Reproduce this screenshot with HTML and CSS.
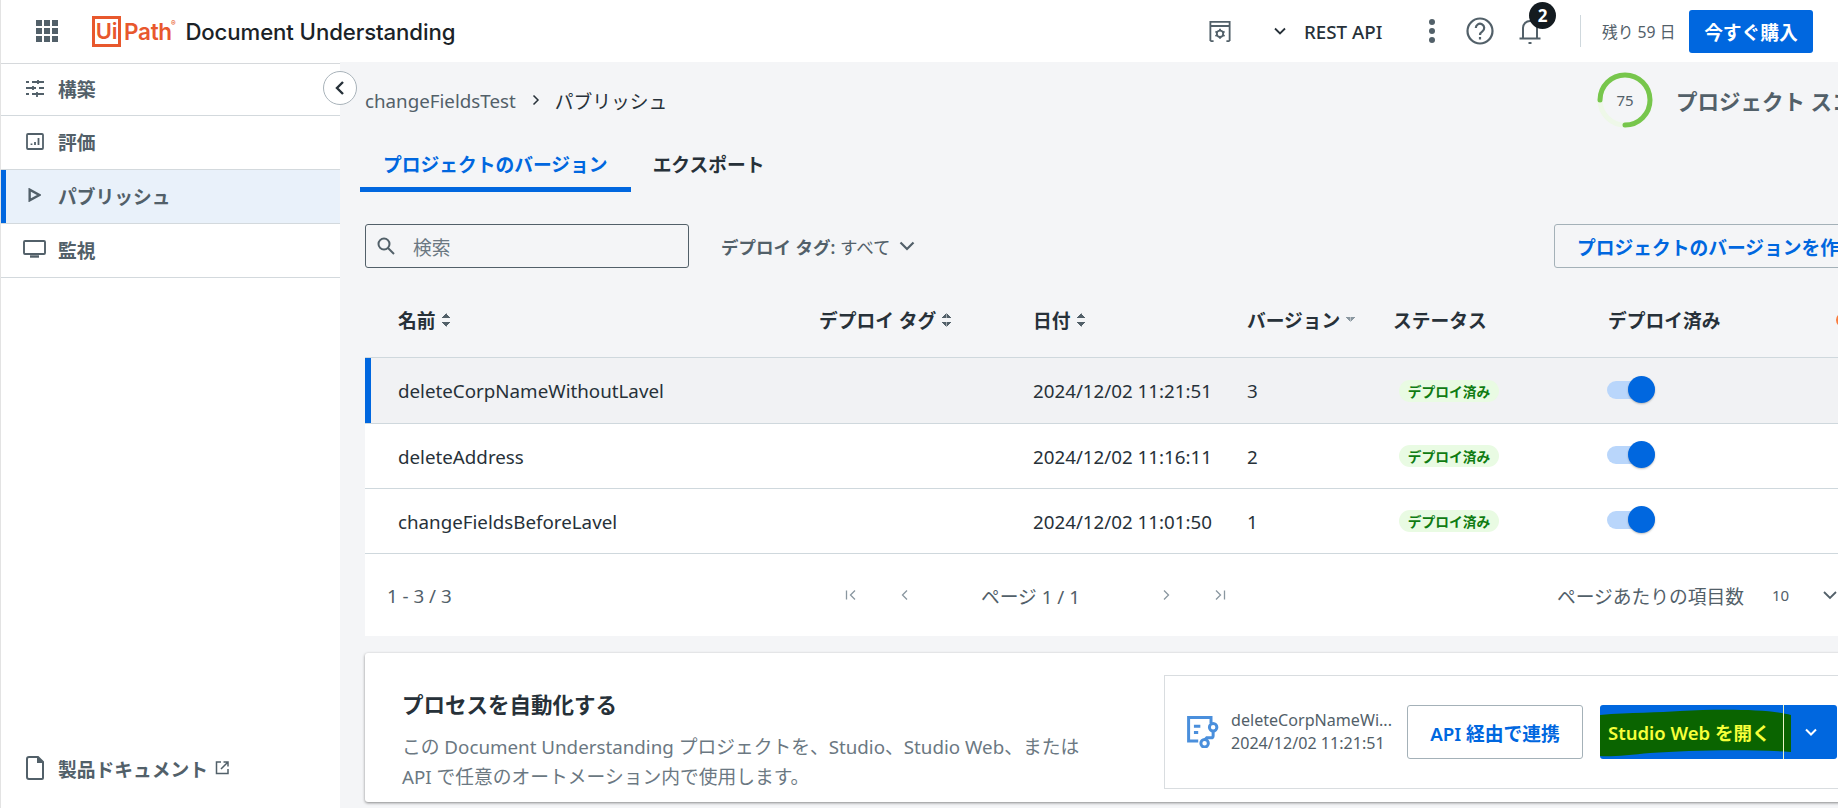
FILE: index.html
```html
<!DOCTYPE html>
<html lang="ja">
<head>
<meta charset="utf-8">
<title>Document Understanding</title>
<link rel="stylesheet" href="styles.css">
</head>
<body>
<div class="app">
  <header class="topbar">
    <div class="waffle"><i></i><i></i><i></i><i></i><i></i><i></i><i></i><i></i><i></i></div>
    <div class="logo"><span class="logo-ui">Ui</span><span class="logo-path">Path</span><span class="logo-r">®</span></div>
    <div class="product">Document Understanding</div>
    <div class="top-right">
      <svg class="ic-tenant" viewBox="0 0 24 24" fill="none" stroke="#526069" stroke-width="2"><path d="M1.500 23V2h21v21M1.500 6.500h21M1.500 23h3.500M22.500 23H19"/><circle cx="12" cy="15" r="3.500"/><path d="M12 9.500v2M12 18.500v2M7 12.500l1.800 1M15.200 16.500l1.800 1M7 17.500l1.800-1M15.200 13.500l1.800-1"/></svg>
      <svg class="ic-chev-s" viewBox="0 0 12 8" fill="none" stroke="#273139" stroke-width="1.800"><path d="M1 1.500l5 5 5-5"/></svg>
      <span class="rest">REST API</span>
      <div class="kebab"><i></i><i></i><i></i></div>
      <svg class="ic-help" viewBox="0 0 28 28" fill="none" stroke="#526069" stroke-width="2.200"><circle cx="14" cy="14" r="12.500"/><path d="M9.800 11a4.200 4.200 0 1 1 6.600 3.400c-1.500 1-2.400 1.800-2.400 3.600" /><path d="M14 20v2.500"/></svg>
      <div class="bell">
        <svg class="ic-bell" viewBox="0 0 24 28" fill="none" stroke="#526069" stroke-width="2"><path d="M5 21V11a7 7 0 0 1 14 0v10M1.500 21.500h21"/><path d="M10.500 26h3"/></svg>
        <span class="badge">2</span>
      </div>
      <span class="vline"></span>
      <span class="trial">残り 59 日</span>
      <span class="buy">今すぐ購入</span>
    </div>
  </header>

  <div class="body-row">
    <aside class="sidebar">
      <button class="collapse"><svg viewBox="0 0 10 16" fill="none" stroke="#273139" stroke-width="2.400"><path d="M8 2L2 8l6 6"/></svg></button>
      <nav class="nav">
        <a class="nav-item"><span class="nav-ic"><svg width="20" height="18" viewBox="0 0 20 18" fill="none" stroke="#526069" stroke-width="1.800"><path d="M1 3h3M7 3h12M13 1v4M1 9h10M14 9h5M8 7v4M1 15h3M7 15h12M12 13v5"/></svg></span>構築</a>
        <a class="nav-item"><span class="nav-ic"><svg width="18" height="17" viewBox="0 0 18 17" fill="none" stroke="#526069" stroke-width="1.800"><rect x="1" y="1" width="16" height="15" rx="1"/><path d="M5.500 12v-1.500M9 12V9M12.500 12V5"/></svg></span>評価</a>
        <a class="nav-item active"><span class="nav-ic"><svg width="13" height="14" viewBox="0 0 12 13" fill="none" stroke="#526069" stroke-width="2.200"><path d="M1.500 1.500v10l9-5z"/></svg></span>パブリッシュ</a>
        <a class="nav-item"><span class="nav-ic"><svg width="23" height="18" viewBox="0 0 23 18" fill="none" stroke="#526069" stroke-width="1.900"><rect x="1" y="1" width="21" height="13" rx="1"/><path d="M7 16.500h9" stroke-width="2.400"/></svg></span>監視</a>
      </nav>
      <a class="docs"><span class="nav-ic"><svg width="18" height="24" viewBox="0 0 18 24" fill="none" stroke="#526069" stroke-width="2"><path d="M3 1h9l5 5v16a1 1 0 0 1-1 1H3a2 2 0 0 1-2-2V3a2 2 0 0 1 2-2z"/><path d="M12 1v5h5" fill="#526069"/></svg></span>製品ドキュメント<svg class="ic-ext" width="14" height="14" viewBox="0 0 14 14" fill="none" stroke="#526069" stroke-width="1.500"><path d="M6 1H1.500v11.500H13V8M8.500 1H13v4.500M13 1L6 8"/></svg></a>
    </aside>

    <main class="main">
      <div class="inner">
        <div class="crumb-row">
          <div class="crumbs"><span class="crumb-a">changeFieldsTest</span><svg class="crumb-sep" viewBox="0 0 8 12" fill="none" stroke="#273139" stroke-width="1.500"><path d="M1.500 1.500L6 6l-4.500 4.500"/></svg><span class="crumb-b">パブリッシュ</span></div>
          <div class="score">
            <svg class="ring" viewBox="0 0 56 56" fill="none"><circle cx="28" cy="28" r="25" stroke="#eef8e8" stroke-width="5"/><path d="M3 28A25 25 0 1 1 28 53" stroke="#77c64c" stroke-width="5" stroke-linecap="round"/></svg>
            <span class="score-num">75</span>
            <span class="score-title">プロジェクト スコア</span>
          </div>
        </div>

        <div class="tabs">
          <div class="tab active">プロジェクトのバージョン</div>
          <div class="tab">エクスポート</div>
        </div>

        <div class="toolbar">
          <div class="search">
            <svg width="18" height="18" viewBox="0 0 18 18" fill="none" stroke="#526069" stroke-width="2"><circle cx="7" cy="7" r="5.500"/><path d="M11 11l6 6"/></svg>
            <span>検索</span>
          </div>
          <div class="filter"><b>デプロイ タグ:</b> すべて<svg width="16" height="10" viewBox="0 0 16 10" fill="none" stroke="#526069" stroke-width="2.200"><path d="M1.500 1.500L8 8l6.500-6.500"/></svg></div>
          <div class="create">プロジェクトのバージョンを作成</div>
        </div>

        <div class="table">
          <div class="row head">
            <div class="cell">名前<span class="sort"></span></div>
            <div class="cell">デプロイ タグ<span class="sort"></span></div>
            <div class="cell">日付<span class="sort"></span></div>
            <div class="cell">バージョン<span class="sort down"></span></div>
            <div class="cell">ステータス</div>
            <div class="cell">デプロイ済み<span class="warn"></span></div>
          </div>
          <div class="row item selected">
            <div class="cell">deleteCorpNameWithoutLavel</div><div class="cell"></div>
            <div class="cell">2024/12/02 11:21:51</div><div class="cell">3</div>
            <div class="cell"><span class="pill">デプロイ済み</span></div>
            <div class="cell"><span class="toggle"></span></div>
          </div>
          <div class="row item">
            <div class="cell">deleteAddress</div><div class="cell"></div>
            <div class="cell">2024/12/02 11:16:11</div><div class="cell">2</div>
            <div class="cell"><span class="pill">デプロイ済み</span></div>
            <div class="cell"><span class="toggle"></span></div>
          </div>
          <div class="row item">
            <div class="cell">changeFieldsBeforeLavel</div><div class="cell"></div>
            <div class="cell">2024/12/02 11:01:50</div><div class="cell">1</div>
            <div class="cell"><span class="pill">デプロイ済み</span></div>
            <div class="cell"><span class="toggle"></span></div>
          </div>
          <div class="pager">
            <span class="count">1 - 3 / 3</span>
            <svg class="pg pg-first" viewBox="0 0 12 12" fill="none" stroke="#8a97a0" stroke-width="1.300"><path d="M1.500 1.500v9M10 1.500L5.500 6l4.500 4.500"/></svg>
            <svg class="pg pg-prev" viewBox="0 0 12 12" fill="none" stroke="#8a97a0" stroke-width="1.300"><path d="M8 1.500L3.500 6 8 10.500"/></svg>
            <span class="page">ページ 1 / 1</span>
            <svg class="pg pg-next" viewBox="0 0 12 12" fill="none" stroke="#8a97a0" stroke-width="1.300"><path d="M4 1.500L8.500 6 4 10.500"/></svg>
            <svg class="pg pg-last" viewBox="0 0 12 12" fill="none" stroke="#8a97a0" stroke-width="1.300"><path d="M10.500 1.500v9M2 1.500L6.500 6 2 10.500"/></svg>
            <span class="perpage">ページあたりの項目数</span>
            <span class="size">10</span>
            <svg class="pg-chev" viewBox="0 0 14 9" fill="none" stroke="#526069" stroke-width="1.800"><path d="M1 1l6 6 6-6"/></svg>
          </div>
        </div>

        <section class="card">
          <div class="card-text">
            <h2>プロセスを自動化する</h2>
            <p>この Document Understanding プロジェクトを、Studio、Studio Web、または<br>API で任意のオートメーション内で使用します。</p>
          </div>
          <div class="box">
            <svg class="ic-flow" viewBox="1.500 1.500 30 30" fill="none" stroke="#4a8fdc" stroke-width="2.800"><path d="M24 8V3H3v22h9"/><path d="M8 11h6M8 17h4"/><circle cx="26" cy="12" r="3.500"/><circle cx="18" cy="27" r="3.500"/><path d="M26 16v4a2 2 0 0 1-2 2h-4l-2 2"/></svg>
            <div class="ver"><div>deleteCorpNameWi...</div><div>2024/12/02 11:21:51</div></div>
            <div class="btn-api">API 経由で連携</div>
            <div class="btn-studio">
              <svg class="scribble" viewBox="0 0 191 54" preserveAspectRatio="none"><path fill="#0a6400" d="M0 10C30 7 60 8 80 6 120 4 170 4 191 10V47C150 44 90 45 50 48 30 50 10 52 0 51Z"/></svg>
              <span class="studio-main">Studio Web を開く</span>
              <span class="studio-chev"><svg width="12" height="8" viewBox="0 0 12 8" fill="none" stroke="#fff" stroke-width="2"><path d="M1 1.500l5 5 5-5"/></svg></span>
            </div>
          </div>
        </section>
      </div>
    </main>
  </div>
</div>
</body>
</html>
```

FILE: styles.css
```css
* { box-sizing: border-box; }
html, body { margin: 0; height: 100%; overflow: hidden; }
body {
  font-family: "Noto Sans", "Noto Sans CJK JP", sans-serif;
  color: #273139;
  background: #fff;
}
.app { height: 808px; width: 1838px; display: flex; flex-direction: column; border-left: 1px solid #e3e3e3; overflow: hidden; }

/* top bar */
.topbar { height: 62px; flex: none; display: flex; align-items: center; background: #fff; }
.waffle { width: 22px; height: 22px; margin-left: 35px; display: grid; grid-template-columns: repeat(3, 6px); gap: 2px; }
.waffle i { background: #526069; width: 6px; height: 6px; }
.logo { margin-left: 34px; display: flex; align-items: center; color: #e8582d; font-family: "Inter", sans-serif; font-weight: 600; font-size: 22.500px; letter-spacing: -0.3px; }
.logo-ui { border: 3px solid #e8582d; width: 29px; height: 31px; display: flex; align-items: center; justify-content: center; font-size: 22px; line-height: 1; }
.logo-path { margin-left: 3px; width: 47px; white-space: nowrap; }
.logo-r { font-size: 7px; align-self: flex-start; margin-top: 3px; }
.product { margin-left: 10px; font-family: "Inter", sans-serif; font-weight: 500; font-size: 22.200px; letter-spacing: -0.1px; color: #1b2227; }
.top-right { margin-left: auto; display: flex; align-items: center; height: 100%; position: relative; }
.ic-tenant { width: 22px; height: 22px; margin-right: 43px; }
.ic-chev-s { width: 12px; height: 8px; margin-right: 18px; }
.rest { font-size: 18.750px; font-weight: 500; width: 80px; white-space: nowrap; margin-right: 45px; }
.kebab { width: 6px; display: flex; flex-direction: column; gap: 3px; margin-right: 31px; }
.kebab i { width: 6px; height: 6px; border-radius: 50%; background: #526069; }
.ic-help { width: 28px; height: 28px; margin-right: 24px; }
.bell { position: relative; width: 24px; height: 28px; margin-right: 38px; }
.ic-bell { width: 24px; height: 28px; display: block; }
.badge { position: absolute; left: 11px; top: -15px; width: 27px; height: 27px; border-radius: 50%; background: #141b20; color: #fff; font-size: 17px; font-weight: 700; display: flex; align-items: center; justify-content: center; }
.vline { width: 1px; height: 32px; background: #cfd8dd; margin-right: 21px; }
.trial { font-size: 15.750px; color: #526069; width: 74px; white-space: nowrap; margin-right: 13px; }
.buy { width: 124px; height: 43px; background: #0067df; color: #fff; border-radius: 3px; display: flex; align-items: center; justify-content: center; font-size: 18.750px; font-weight: 700; margin-right: 25px; }

/* layout */
.body-row { flex: 1; display: flex; min-height: 0; }
.sidebar { width: 339px; flex: none; position: relative; display: flex; flex-direction: column; background: #fff; border-top: 1px solid #d6d9dc; margin-top: 1px; }
.nav-item { height: 54px; display: flex; align-items: center; font-size: 18.750px; font-weight: 600; color: #526069; border-bottom: 1px solid #d3d9dd; padding-bottom: 3px; }
.nav-item:first-child { height: 52px; }
.nav-item.active { background: #e9f1fa; box-shadow: inset 5px 0 0 #0067df; border-top: 1px solid #d3d9dd; margin-top: -1px; height: 55px; }
.nav-ic { width: 57px; flex: none; display: flex; justify-content: center; padding-left: 10px; }
.docs { margin-top: auto; margin-bottom: 25px; display: flex; align-items: center; font-size: 18.750px; font-weight: 600; color: #526069; height: 30px; }
.ic-ext { margin-left: 7px; }
.collapse { position: absolute; top: 7px; right: -17px; width: 34px; height: 34px; border-radius: 50%; background: #fff; border: 1px solid #a9b3ba; padding: 0; display: flex; align-items: center; justify-content: center; z-index: 2; }
.collapse svg { width: 10px; height: 16px; }

.main { flex: 1; min-width: 0; background: #f4f5f7; overflow: hidden; padding-left: 25px; }
.inner { width: 1505px; }

.crumb-row { height: 76px; display: flex; align-items: center; justify-content: space-between; }
.crumbs { display: flex; align-items: center; font-size: 18.750px; }
.crumb-a { color: #526069; }
.crumb-sep { width: 8px; height: 12px; margin: 0 15px 0 16px; }
.crumb-b { color: #273139; }
.score { width: 273px; display: flex; align-items: center; position: relative; }
.ring { width: 56px; height: 56px; flex: none; }
.score-num { position: absolute; left: 0; width: 56px; text-align: center; font-size: 15px; color: #526069; }
.score-title { margin-left: 23px; font-size: 21.500px; font-weight: 600; color: #526069; white-space: nowrap; }

.tabs { height: 54px; display: flex; margin-left: -5px; }
.tab { padding: 2px 22px 0; font-size: 18.750px; font-weight: 600; display: flex; align-items: center; color: #273139; border-bottom: 5px solid transparent; }
.tab.active { color: #0067df; border-bottom-color: #0067df; padding: 2px 23px 0; }

.toolbar { margin-top: 32px; height: 44px; display: flex; align-items: center; }
.search { width: 324px; height: 44px; border: 1px solid #526069; border-radius: 3px; display: flex; align-items: center; padding-left: 11px; gap: 18px; color: #6b7882; font-size: 18.750px; }
.filter { margin-left: 32px; font-size: 17.500px; color: #526069; display: flex; align-items: center; white-space: pre; }
.filter b { font-weight: 600; }
.filter svg { margin-left: 8px; }
.create { margin-left: auto; width: 316px; height: 44px; border: 1px solid #a4b1b8; border-radius: 3px; color: #0067df; font-size: 18.750px; font-weight: 600; display: flex; align-items: center; padding-left: 22px; white-space: nowrap; }

.row { display: grid; grid-template-columns: 421px 214px 214px 146px 215px 1fr; padding-left: 33px; align-items: center; border-bottom: 1px solid #cfd8dd; }
.row.head { height: 90px; font-size: 18.750px; font-weight: 600; padding-top: 14px; }
.row.item { height: 65px; background: #fff; font-size: 18.750px; color: #273139; }
.row.item.selected { height: 66px; background: #f1f2f4; box-shadow: inset 6px 0 0 #0067df; }
.cell { display: flex; align-items: center; white-space: nowrap; position: relative; }
.sort { display: inline-block; margin-left: 6px; width: 9px; height: 14px; background:
  linear-gradient(to bottom right, transparent 50%, #526069 50%) 0 0 / 4.500px 5px no-repeat,
  linear-gradient(to bottom left, transparent 50%, #526069 50%) 4.500px 0 / 4.500px 5px no-repeat,
  linear-gradient(to top right, transparent 50%, #526069 50%) 0 9px / 4.500px 5px no-repeat,
  linear-gradient(to top left, transparent 50%, #526069 50%) 4.500px 9px / 4.500px 5px no-repeat; }
.sort.down { height: 5px; width: 9px; background:
  linear-gradient(to top right, transparent 50%, #8a97a0 50%) 0 0 / 4.500px 5px no-repeat,
  linear-gradient(to top left, transparent 50%, #8a97a0 50%) 4.500px 0 / 4.500px 5px no-repeat; }
.warn { position: absolute; left: 228px; width: 14px; height: 14px; border-radius: 50%; border: 2px solid #fa7c3d; }
.pill { margin-left: 6px; width: 100px; height: 22px; border-radius: 11px; background: #e9fbe3; color: #0f7b12; font-size: 13.750px; font-weight: 600; display: flex; align-items: center; justify-content: center; }
.toggle { width: 48px; margin-left: -1px; height: 18px; margin-top: -2px; border-radius: 9px; background: #b9d6fb; position: relative; display: block; }
.toggle::after { content: ""; position: absolute; right: 0; top: -5px; width: 27px; height: 27px; border-radius: 50%; background: #0067df; box-shadow: 0 1px 2px rgba(0, 0, 0, .25); }

.pager { height: 82px; background: #fff; display: flex; align-items: center; font-size: 18.750px; color: #526069; padding-left: 22px; }
.count { width: 458px; white-space: nowrap; }
.pg { width: 12px; height: 12px; flex: none; }
.pg-prev { margin-left: 42px; }
.page { margin-left: 70px; width: 100px; white-space: nowrap; }
.pg-next { margin-left: 79px; }
.pg-last { margin-left: 42px; }
.perpage { margin-left: 331px; width: 188px; white-space: nowrap; }
.size { margin-left: 27px; font-size: 15px; width: 20px; }
.pg-chev { width: 14px; height: 9px; margin-left: 31px; flex: none; }

.card { margin-top: 17px; height: 149px; background: #fff; border-radius: 3px; box-shadow: 0 1px 3px rgba(0, 0, 0, .45); display: flex; align-items: flex-start; padding: 22px 0 0 37px; }
.card-text { width: 762px; flex: none; padding-top: 16px; }
.card-text h2 { margin: 0 0 13px; font-size: 21.500px; font-weight: 600; line-height: 28px; color: #273139; }
.card-text p { margin: 0; font-size: 18.750px; line-height: 30px; color: #6b7882; white-space: nowrap; }
.box { width: 684px; height: 114px; border: 1px solid #d9dde0; display: flex; align-items: center; padding-left: 22px; }
.ic-flow { width: 32px; height: 32px; flex: none; }
.ver { width: 176px; margin-left: 12px; font-size: 16.100px; line-height: 23px; color: #526069; white-space: nowrap; }
.btn-api { width: 176px; height: 54px; border: 1px solid #a4b1b8; border-radius: 3px; color: #0067df; font-size: 18.750px; font-weight: 600; display: flex; align-items: center; justify-content: center; background: #fff; }
.btn-studio { margin-left: 17px; width: 237px; height: 54px; background: #0067df; border-radius: 3px; display: flex; position: relative; overflow: hidden; }
.scribble { position: absolute; left: 0; top: 0; width: 191px; height: 54px; }
.studio-main { position: relative; width: 184px; border-right: 1px solid #eef4c4; color: #f6ff3a; font-size: 18.500px; font-weight: 600; display: flex; align-items: center; padding-left: 8px; white-space: nowrap; }
.studio-chev { position: relative; flex: 1; display: flex; align-items: center; justify-content: center; }
```
